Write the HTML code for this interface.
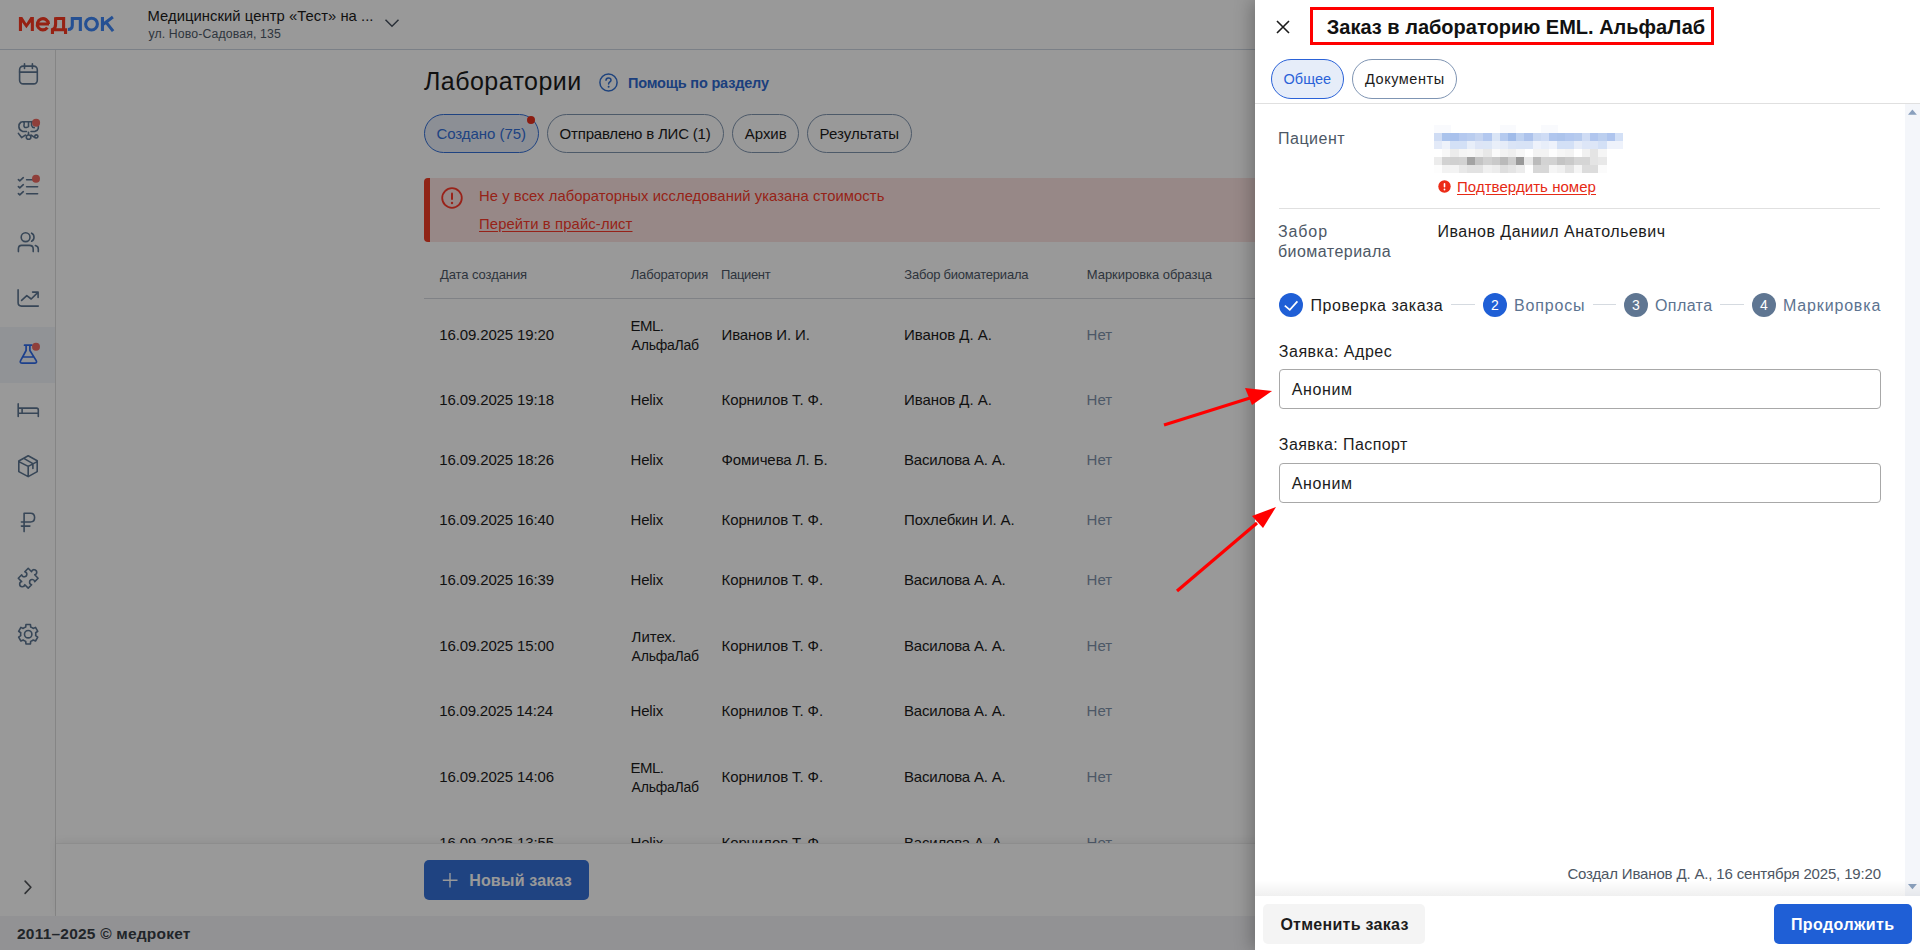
<!DOCTYPE html>
<html><head><meta charset="utf-8">
<style>
*{box-sizing:border-box;margin:0;padding:0}
html,body{width:1920px;height:950px;overflow:hidden;background:#fff;font-family:"Liberation Sans",sans-serif;color:#1c1c1c}
.a{position:absolute;white-space:nowrap}
.tab{position:absolute;height:39px;border:1px solid #8196b0;border-radius:20px}
.tab.act{background:#e9eef8;border-color:#3470d8}
.dtab{position:absolute;height:40px;border:1px solid #7f95b3;border-radius:20px}
.dtab.act{background:#e6edf9;border-color:#2a62d8}
.snum{position:absolute;width:24px;height:24px;border-radius:50%;color:#fff;font-size:14px;line-height:24px;text-align:center}
.inp{position:absolute;width:602px;height:40px;border:1px solid #a8a8a8;border-radius:4px}
.hl{position:absolute;height:1px}
</style></head><body>
<!-- PAGE -->
<div class="hl" style="left:0;top:49px;width:1920px;background:#cdd6e2"></div>
<svg class="a" style="left:0;top:0" width="120" height="40" viewBox="0 0 120 40" fill="none" stroke-linejoin="miter">
<g stroke="#fa3a22" stroke-width="3.1">
<path d="M18.9 17H22.3L26.4 23.6L30.5 17H33.9V31H30.8V22.3L26.4 28.2L22 22.3V31H18.9Z" fill="#fa3a22" stroke="none"/>
<path d="M49 24H37.8M48.5 24A5.6 5.6 0 1 0 47.4 27.6" />
<path d="M55.4 18.45H65.2M63.6 17V29.8M55.6 17.2V24.2C55.6 27.2 54.5 29 52.3 29.8M50.9 29.75H67.1M52.45 29.8V34.1M65.55 29.8V34"/>
</g>
<g stroke="#3f86f5" stroke-width="3.1">
<path d="M70.8 18.5H81.9M80.35 17V31M72.3 17.2V25.2C72.3 28.2 70.9 29.45 67.9 29.45"/>
<circle cx="91.5" cy="24.1" r="5.9"/>
<path d="M102.45 17V31M103.2 24.2L112.9 17.1M106.2 22.4L113.1 31.1"/>
</g>
</svg>
<svg class="a" style="left:384px;top:18px" width="16" height="10" viewBox="0 0 16 10"><path d="M1.5 1.8 L8 8.2 L14.5 1.8" fill="none" stroke="#46505e" stroke-width="1.5"/></svg>
<div class="a" style="left:55px;top:50px;width:1px;height:866px;background:#dedede"></div>
<div class="a" style="left:0;top:327px;width:55px;height:56px;background:#f2f5fa"></div>
<svg class="a" style="left:0;top:0" width="56" height="950" viewBox="0 0 56 950" fill="none" stroke="#5c7591" stroke-width="1.6" stroke-linecap="round" stroke-linejoin="round">
<rect x="19.6" y="66.1" width="17.7" height="17.8" rx="3.6"/><path d="M24.5 63.8V68.4M32.4 63.8V68.4M19.6 72.1H37.3"/>
<path d="M20.76 122.25C18.23 124.10 17.73 129.83 22.44 131.35L26.48 131.51M20.76 122.25C22.78 121.24 24.80 121.75 24.13 124.10C23.45 126.46 24.46 128.15 27.16 127.30M23.45 121.68L32.21 121.48M28.50 121.92V126.80M32.21 121.48C30.86 123.77 31.20 127.47 34.23 127.64M37.60 123.77C39.28 126.80 38.61 130.84 34.90 131.35L31.03 131.51M28.50 132.36V134.55M18.40 133.37L21.60 137.58L25.30 135.05M26.31 137.24C26.31 139.93 30.86 139.93 30.86 137.24C30.86 135.89 29.68 135.05 28.50 135.05C27.33 135.05 26.31 135.89 26.31 137.24M31.20 135.05L34.90 137.58C37.60 138.92 38.95 135.89 36.92 135.05C35.58 134.55 34.23 135.56 34.90 137.58"/>
<path d="M18.4 179.6L19.8 180.9L23.3 177.7M18.4 186.6L19.8 187.9L23.3 184.7M18.4 193.6L19.8 194.9L23.3 191.7M26.6 179.8H37.6M26.6 186.7H37.6M26.6 193.8H37.6"/>
<circle cx="25.6" cy="237.2" r="4.4"/><path d="M31.6 233.2C34.8 234.6 34.8 239.8 31.6 241.2M18.4 251.6V248.9C18.4 246.9 19.4 245.4 21.6 245.4H29.4C31.6 245.4 33.2 246.6 33.2 248.9V251.6M35.4 245.6C37.2 246.2 38.3 247.3 38.3 249V251.6"/>
<path d="M18.1 289.9V302.6C18.1 305 19.3 306.1 21.5 306.1H38.3M21.6 300.4L26.8 295.6L31.2 299L37.9 292.4M32.6 292.1H38.1V297.4"/>
<path d="M18.2 403.9V416.4M18.2 408.1H36.6C37.6 408.1 38.3 408.8 38.3 410V416.4M18.2 413.2H38.3M22.1 408.1V413.2"/>
<path d="M28.2 455.7L37.2 460.7V471.6L28.2 476.6L18.8 471.6V461L28.2 455.7ZM18.8 461.6L28.2 466.4L37.2 461.6M28.2 466.4V476.6M23.8 458.4L32.9 463.6V468.4"/>
<path d="M24.1 531.6V513.2H30.6C33 513.2 34.6 515 34.6 517.6C34.6 520.2 33 522 30.6 522H21.4M21.4 526.1H29.9"/>
<g transform="translate(28.2 578.2) rotate(45)"><path d="M-7 -7H-2.2A2.6 2.6 0 1 1 2.2 -7H7V-2.2A2.6 2.6 0 1 0 7 2.2V7H2.2A2.6 2.6 0 1 1 -2.2 7H-7V2.2A2.6 2.6 0 1 0 -7 -2.2Z"/></g>
<path d="M24.40 627.62 L25.73 627.01 L25.95 624.46 L30.45 624.46 L30.67 627.01 L32.00 627.62 L33.19 628.46 L35.51 627.38 L37.76 631.28 L35.66 632.75 L35.80 634.20 L35.66 635.65 L37.76 637.12 L35.51 641.02 L33.19 639.94 L32.00 640.78 L30.67 641.39 L30.45 643.94 L25.95 643.94 L25.73 641.39 L24.40 640.78 L23.21 639.94 L20.89 641.02 L18.64 637.12 L20.74 635.65 L20.60 634.20 L20.74 632.75 L18.64 631.28 L20.89 627.38 L23.21 628.46Z"/><circle cx="28.2" cy="634.2" r="3.7"/>
<path d="M25.1 881.1L30.9 887.2L25.1 893.4" stroke="#505357"/>
</svg>
<svg class="a" style="left:0;top:0" width="56" height="400" viewBox="0 0 56 400" stroke="none">
<path d="M24.5 345.2H31.9M26.1 345.4V350.5L20.6 360.6C19.7 362.2 20.6 363.1 22.2 363.1H34.6C36.2 363.1 37.1 362.2 36.2 360.6L29.9 350.5V345.4M22.8 357H33.6" fill="none" stroke="#2f6bea" stroke-width="1.7" stroke-linecap="round" stroke-linejoin="round"/>
<circle cx="36.1" cy="122.8" r="4" fill="#ef6a62"/><circle cx="36" cy="178.8" r="4" fill="#ef6a62"/><circle cx="36" cy="346.8" r="4" fill="#ef6a62"/>
</svg>

<div class="tab act" style="left:424px;top:114px;width:115px"></div>
<div class="a" style="left:527px;top:116px;width:8px;height:8px;border-radius:50%;background:#e8301c"></div>
<div class="tab" style="left:547px;top:114px;width:177px"></div>
<div class="tab" style="left:732px;top:114px;width:67px"></div>
<div class="tab" style="left:807px;top:114px;width:105px"></div>
<div class="a" style="left:424px;top:178px;width:900px;height:64px;background:#fce3e1;border-left:6px solid #f03c26;border-radius:4px 0 0 4px"></div>
<svg class="a" style="left:441px;top:187px" width="22" height="22" viewBox="0 0 22 22"><circle cx="11" cy="11" r="9.8" fill="none" stroke="#ff3a2a" stroke-width="1.8"/><rect x="10" y="5.5" width="2" height="7.5" rx="1" fill="#ff3a2a"/><circle cx="11" cy="16" r="1.2" fill="#ff3a2a"/></svg>
<svg class="a" style="left:599px;top:73px" width="19" height="19" viewBox="0 0 19 19"><circle cx="9.5" cy="9.5" r="8.6" fill="none" stroke="#3370d1" stroke-width="1.5"/><path d="M7 7.3C7 5.9 8.1 5 9.5 5C10.9 5 12 5.9 12 7.2C12 8.9 9.6 9 9.6 11" fill="none" stroke="#3370d1" stroke-width="1.5" stroke-linecap="round"/><circle cx="9.6" cy="13.8" r="1" fill="#3370d1"/></svg>
<div class="a" style="left:147.50px;top:9.07px;font-size:14.8px;font-weight:400;letter-spacing:0.047px;line-height:1;color:#1c1c1c;">Медицинский центр «Тест» на ...</div>
<div class="a" style="left:148.50px;top:28.29px;font-size:12.3px;font-weight:400;letter-spacing:0.110px;line-height:1;color:#4f5a68;">ул. Ново-Садовая, 135</div>
<div class="a" style="left:424.00px;top:69.34px;font-size:25px;font-weight:400;letter-spacing:0.440px;line-height:1;color:#1c1c1c;">Лаборатории</div>
<div class="a" style="left:628.00px;top:76.33px;font-size:14.5px;font-weight:700;letter-spacing:-0.188px;line-height:1;color:#2f6ad0;">Помощь по разделу</div>
<div class="a" style="left:436.40px;top:126.00px;font-size:15px;font-weight:400;letter-spacing:-0.036px;line-height:1;color:#3470d8;">Создано (75)</div>
<div class="a" style="left:559.60px;top:126.00px;font-size:15px;font-weight:400;letter-spacing:-0.205px;line-height:1;color:#1c1c1c;">Отправлено в ЛИС (1)</div>
<div class="a" style="left:744.80px;top:126.00px;font-size:15px;font-weight:400;letter-spacing:-0.050px;line-height:1;color:#1c1c1c;">Архив</div>
<div class="a" style="left:819.50px;top:126.00px;font-size:15px;font-weight:400;letter-spacing:0.067px;line-height:1;color:#1c1c1c;">Результаты</div>
<div class="a" style="left:479.00px;top:188.97px;font-size:14.8px;font-weight:400;letter-spacing:0.067px;line-height:1;color:#fa3a2a;">Не у всех лабораторных исследований указана стоимость</div>
<div class="a" style="left:479.00px;top:217.47px;font-size:14.8px;font-weight:400;letter-spacing:0.132px;line-height:1;color:#fa3a2a;text-decoration:underline;text-underline-offset:2px">Перейти в прайс-лист</div>
<div class="a" style="left:440.00px;top:267.80px;font-size:13px;font-weight:400;letter-spacing:-0.083px;line-height:1;color:#4d5866;">Дата создания</div>
<div class="a" style="left:630.75px;top:267.80px;font-size:13px;font-weight:400;letter-spacing:-0.175px;line-height:1;color:#4d5866;">Лаборатория</div>
<div class="a" style="left:721.00px;top:267.80px;font-size:13px;font-weight:400;letter-spacing:-0.333px;line-height:1;color:#4d5866;">Пациент</div>
<div class="a" style="left:904.30px;top:267.80px;font-size:13px;font-weight:400;letter-spacing:-0.224px;line-height:1;color:#4d5866;">Забор биоматериала</div>
<div class="a" style="left:1086.80px;top:267.80px;font-size:13px;font-weight:400;letter-spacing:-0.053px;line-height:1;color:#4d5866;">Маркировка образца</div>
<div class="hl" style="left:424px;top:298px;width:900px;background:#d5d9df"></div>
<div class="a" style="left:439.20px;top:327.30px;font-size:15px;font-weight:400;letter-spacing:-0.120px;line-height:1;color:#1c1c1c;">16.09.2025 19:20</div>
<div class="a" style="left:630.60px;top:317.60px;font-size:15px;font-weight:400;letter-spacing:-0.600px;line-height:1;color:#1c1c1c;">EML.</div>
<div class="a" style="left:631.60px;top:337.65px;font-size:14px;font-weight:400;letter-spacing:-0.229px;line-height:1;color:#1c1c1c;">АльфаЛаб</div>
<div class="a" style="left:721.50px;top:327.30px;font-size:15px;font-weight:400;letter-spacing:-0.127px;line-height:1;color:#1c1c1c;">Иванов И. И.</div>
<div class="a" style="left:904.00px;top:327.30px;font-size:15px;font-weight:400;letter-spacing:-0.045px;line-height:1;color:#1c1c1c;">Иванов Д. А.</div>
<div class="a" style="left:1086.60px;top:327.30px;font-size:15px;font-weight:400;letter-spacing:0.000px;line-height:1;color:#8193ab;">Нет</div>
<div class="a" style="left:439.20px;top:392.30px;font-size:15px;font-weight:400;letter-spacing:-0.120px;line-height:1;color:#1c1c1c;">16.09.2025 19:18</div>
<div class="a" style="left:630.60px;top:392.30px;font-size:15px;font-weight:400;letter-spacing:-0.200px;line-height:1;color:#1c1c1c;">Helix</div>
<div class="a" style="left:721.50px;top:392.30px;font-size:15px;font-weight:400;letter-spacing:-0.100px;line-height:1;color:#1c1c1c;">Корнилов Т. Ф.</div>
<div class="a" style="left:904.00px;top:392.30px;font-size:15px;font-weight:400;letter-spacing:-0.045px;line-height:1;color:#1c1c1c;">Иванов Д. А.</div>
<div class="a" style="left:1086.60px;top:392.30px;font-size:15px;font-weight:400;letter-spacing:0.000px;line-height:1;color:#8193ab;">Нет</div>
<div class="a" style="left:439.20px;top:452.30px;font-size:15px;font-weight:400;letter-spacing:-0.120px;line-height:1;color:#1c1c1c;">16.09.2025 18:26</div>
<div class="a" style="left:630.60px;top:452.30px;font-size:15px;font-weight:400;letter-spacing:-0.200px;line-height:1;color:#1c1c1c;">Helix</div>
<div class="a" style="left:721.50px;top:452.30px;font-size:15px;font-weight:400;letter-spacing:-0.077px;line-height:1;color:#1c1c1c;">Фомичева Л. Б.</div>
<div class="a" style="left:904.00px;top:452.30px;font-size:15px;font-weight:400;letter-spacing:-0.208px;line-height:1;color:#1c1c1c;">Василова А. А.</div>
<div class="a" style="left:1086.60px;top:452.30px;font-size:15px;font-weight:400;letter-spacing:0.000px;line-height:1;color:#8193ab;">Нет</div>
<div class="a" style="left:439.20px;top:512.30px;font-size:15px;font-weight:400;letter-spacing:-0.120px;line-height:1;color:#1c1c1c;">16.09.2025 16:40</div>
<div class="a" style="left:630.60px;top:512.30px;font-size:15px;font-weight:400;letter-spacing:-0.200px;line-height:1;color:#1c1c1c;">Helix</div>
<div class="a" style="left:721.50px;top:512.30px;font-size:15px;font-weight:400;letter-spacing:-0.100px;line-height:1;color:#1c1c1c;">Корнилов Т. Ф.</div>
<div class="a" style="left:904.00px;top:512.30px;font-size:15px;font-weight:400;letter-spacing:-0.143px;line-height:1;color:#1c1c1c;">Похлебкин И. А.</div>
<div class="a" style="left:1086.60px;top:512.30px;font-size:15px;font-weight:400;letter-spacing:0.000px;line-height:1;color:#8193ab;">Нет</div>
<div class="a" style="left:439.20px;top:572.30px;font-size:15px;font-weight:400;letter-spacing:-0.120px;line-height:1;color:#1c1c1c;">16.09.2025 16:39</div>
<div class="a" style="left:630.60px;top:572.30px;font-size:15px;font-weight:400;letter-spacing:-0.200px;line-height:1;color:#1c1c1c;">Helix</div>
<div class="a" style="left:721.50px;top:572.30px;font-size:15px;font-weight:400;letter-spacing:-0.100px;line-height:1;color:#1c1c1c;">Корнилов Т. Ф.</div>
<div class="a" style="left:904.00px;top:572.30px;font-size:15px;font-weight:400;letter-spacing:-0.208px;line-height:1;color:#1c1c1c;">Василова А. А.</div>
<div class="a" style="left:1086.60px;top:572.30px;font-size:15px;font-weight:400;letter-spacing:0.000px;line-height:1;color:#8193ab;">Нет</div>
<div class="a" style="left:439.20px;top:638.30px;font-size:15px;font-weight:400;letter-spacing:-0.120px;line-height:1;color:#1c1c1c;">16.09.2025 15:00</div>
<div class="a" style="left:631.60px;top:628.60px;font-size:15px;font-weight:400;letter-spacing:-0.040px;line-height:1;color:#1c1c1c;">Литех.</div>
<div class="a" style="left:631.60px;top:648.65px;font-size:14px;font-weight:400;letter-spacing:-0.229px;line-height:1;color:#1c1c1c;">АльфаЛаб</div>
<div class="a" style="left:721.50px;top:638.30px;font-size:15px;font-weight:400;letter-spacing:-0.100px;line-height:1;color:#1c1c1c;">Корнилов Т. Ф.</div>
<div class="a" style="left:904.00px;top:638.30px;font-size:15px;font-weight:400;letter-spacing:-0.208px;line-height:1;color:#1c1c1c;">Василова А. А.</div>
<div class="a" style="left:1086.60px;top:638.30px;font-size:15px;font-weight:400;letter-spacing:0.000px;line-height:1;color:#8193ab;">Нет</div>
<div class="a" style="left:439.20px;top:703.30px;font-size:15px;font-weight:400;letter-spacing:-0.187px;line-height:1;color:#1c1c1c;">16.09.2025 14:24</div>
<div class="a" style="left:630.60px;top:703.30px;font-size:15px;font-weight:400;letter-spacing:-0.200px;line-height:1;color:#1c1c1c;">Helix</div>
<div class="a" style="left:721.50px;top:703.30px;font-size:15px;font-weight:400;letter-spacing:-0.100px;line-height:1;color:#1c1c1c;">Корнилов Т. Ф.</div>
<div class="a" style="left:904.00px;top:703.30px;font-size:15px;font-weight:400;letter-spacing:-0.208px;line-height:1;color:#1c1c1c;">Василова А. А.</div>
<div class="a" style="left:1086.60px;top:703.30px;font-size:15px;font-weight:400;letter-spacing:0.000px;line-height:1;color:#8193ab;">Нет</div>
<div class="a" style="left:439.20px;top:769.30px;font-size:15px;font-weight:400;letter-spacing:-0.120px;line-height:1;color:#1c1c1c;">16.09.2025 14:06</div>
<div class="a" style="left:630.60px;top:759.60px;font-size:15px;font-weight:400;letter-spacing:-0.600px;line-height:1;color:#1c1c1c;">EML.</div>
<div class="a" style="left:631.60px;top:779.65px;font-size:14px;font-weight:400;letter-spacing:-0.229px;line-height:1;color:#1c1c1c;">АльфаЛаб</div>
<div class="a" style="left:721.50px;top:769.30px;font-size:15px;font-weight:400;letter-spacing:-0.100px;line-height:1;color:#1c1c1c;">Корнилов Т. Ф.</div>
<div class="a" style="left:904.00px;top:769.30px;font-size:15px;font-weight:400;letter-spacing:-0.208px;line-height:1;color:#1c1c1c;">Василова А. А.</div>
<div class="a" style="left:1086.60px;top:769.30px;font-size:15px;font-weight:400;letter-spacing:0.000px;line-height:1;color:#8193ab;">Нет</div>
<div class="a" style="left:439.20px;top:835.30px;font-size:15px;font-weight:400;letter-spacing:-0.120px;line-height:1;color:#1c1c1c;">16.09.2025 13:55</div>
<div class="a" style="left:630.60px;top:835.30px;font-size:15px;font-weight:400;letter-spacing:-0.200px;line-height:1;color:#1c1c1c;">Helix</div>
<div class="a" style="left:721.50px;top:835.30px;font-size:15px;font-weight:400;letter-spacing:-0.100px;line-height:1;color:#1c1c1c;">Корнилов Т. Ф.</div>
<div class="a" style="left:904.00px;top:835.30px;font-size:15px;font-weight:400;letter-spacing:-0.208px;line-height:1;color:#1c1c1c;">Василова А. А.</div>
<div class="a" style="left:1086.60px;top:835.30px;font-size:15px;font-weight:400;letter-spacing:0.000px;line-height:1;color:#8193ab;">Нет</div>
<div class="a" style="left:56px;top:843px;width:1864px;height:73px;background:#fff;border-top:1px solid #ececec;box-shadow:0 -2px 8px rgba(0,0,0,0.06)"></div>
<div class="a" style="left:424px;top:860px;width:165px;height:40px;background:#3470d8;border-radius:5px"></div>
<svg class="a" style="left:441px;top:871px" width="18" height="18" viewBox="0 0 18 18"><path d="M9 2V16.5M1.8 9.2H16.5" stroke="#fff" stroke-width="1.4"/></svg>
<div class="a" style="left:0;top:916px;width:1920px;height:34px;background:#f3f4f7"></div>
<div class="a" style="left:469.20px;top:872.96px;font-size:16px;font-weight:700;letter-spacing:0.170px;line-height:1;color:#fff;">Новый заказ</div>
<div class="a" style="left:17.00px;top:926.13px;font-size:15.5px;font-weight:700;letter-spacing:0.211px;line-height:1;color:#383e46;">2011–2025 © медрокет</div>
<!-- OVERLAY -->
<div class="a" style="left:0;top:0;width:1920px;height:950px;background:rgba(0,0,0,0.4)"></div>
<!-- DRAWER -->
<div class="a" style="left:1255px;top:0;width:665px;height:950px;background:#fff;box-shadow:-4px 0 16px rgba(0,0,0,0.25)"></div>
<svg class="a" style="left:1276px;top:20px" width="14" height="14" viewBox="0 0 14 14"><path d="M1 1L13 13M13 1L1 13" stroke="#1c1c1c" stroke-width="1.6"/></svg>
<div class="dtab act" style="left:1271px;top:59px;width:73px"></div>
<div class="dtab" style="left:1352px;top:59px;width:105px"></div>
<div class="hl" style="left:1255px;top:103px;width:665px;background:#e0e0e0"></div>
<div class="a" style="left:1905px;top:104px;width:15px;height:792px;background:#f4f6fa"></div>
<svg class="a" style="left:1907px;top:108px" width="11" height="8" viewBox="0 0 11 8"><path d="M1 6.8L5.4 1.6L9.9 6.8Z" fill="#8aa0bd"/></svg>
<svg class="a" style="left:1907px;top:883px" width="11" height="8" viewBox="0 0 11 8"><path d="M1 1L5.4 6.2L9.9 1Z" fill="#8aa0bd"/></svg>
<svg class="a" style="left:1434px;top:125px" width="189" height="48" viewBox="0 0 189 48" shape-rendering="crispEdges"><rect x="0.00" y="0" width="8.52" height="8" fill="#f9fafd"/><rect x="8.22" y="0" width="8.52" height="8" fill="#f9fafd"/><rect x="65.74" y="0" width="8.52" height="8" fill="#f9fafd"/><rect x="73.96" y="0" width="8.52" height="8" fill="#f9fafd"/><rect x="106.83" y="0" width="8.52" height="8" fill="#f9fafd"/><rect x="115.04" y="0" width="8.52" height="8" fill="#f9fafd"/><rect x="0.00" y="8" width="8.52" height="8" fill="#cfdcf4"/><rect x="8.22" y="8" width="8.52" height="8" fill="#aac3ec"/><rect x="16.43" y="8" width="8.52" height="8" fill="#a9c1ec"/><rect x="24.65" y="8" width="8.52" height="8" fill="#b5c9ef"/><rect x="32.87" y="8" width="8.52" height="8" fill="#bacdef"/><rect x="41.09" y="8" width="8.52" height="8" fill="#c5d4f0"/><rect x="49.30" y="8" width="8.52" height="8" fill="#b3c8ef"/><rect x="57.52" y="8" width="8.52" height="8" fill="#dae5f6"/><rect x="65.74" y="8" width="8.52" height="8" fill="#b5caef"/><rect x="73.96" y="8" width="8.52" height="8" fill="#a0bbe9"/><rect x="82.17" y="8" width="8.52" height="8" fill="#bed1f0"/><rect x="90.39" y="8" width="8.52" height="8" fill="#adc3ec"/><rect x="98.61" y="8" width="8.52" height="8" fill="#c9d8f2"/><rect x="106.83" y="8" width="8.52" height="8" fill="#cfdcf5"/><rect x="115.04" y="8" width="8.52" height="8" fill="#b0c6ee"/><rect x="123.26" y="8" width="8.52" height="8" fill="#adc4ec"/><rect x="131.48" y="8" width="8.52" height="8" fill="#b3c8ef"/><rect x="139.70" y="8" width="8.52" height="8" fill="#b7cbee"/><rect x="147.91" y="8" width="8.52" height="8" fill="#cfdcf4"/><rect x="156.13" y="8" width="8.52" height="8" fill="#b1c6ee"/><rect x="164.35" y="8" width="8.52" height="8" fill="#bccfef"/><rect x="172.57" y="8" width="8.52" height="8" fill="#afc5ee"/><rect x="180.78" y="8" width="8.52" height="8" fill="#d3e0f6"/><rect x="0.00" y="16" width="8.52" height="8" fill="#e3eaf8"/><rect x="8.22" y="16" width="8.52" height="8" fill="#eef2fa"/><rect x="16.43" y="16" width="8.52" height="8" fill="#d3e0f6"/><rect x="24.65" y="16" width="8.52" height="8" fill="#d3e0f6"/><rect x="32.87" y="16" width="8.52" height="8" fill="#e8eef9"/><rect x="41.09" y="16" width="8.52" height="8" fill="#dde5f6"/><rect x="49.30" y="16" width="8.52" height="8" fill="#dce6f6"/><rect x="57.52" y="16" width="8.52" height="8" fill="#e9eff9"/><rect x="65.74" y="16" width="8.52" height="8" fill="#e6ecf8"/><rect x="73.96" y="16" width="8.52" height="8" fill="#dae4f6"/><rect x="82.17" y="16" width="8.52" height="8" fill="#d8e3f6"/><rect x="90.39" y="16" width="8.52" height="8" fill="#d8e3f6"/><rect x="98.61" y="16" width="8.52" height="8" fill="#eef2fb"/><rect x="106.83" y="16" width="8.52" height="8" fill="#e8eef9"/><rect x="115.04" y="16" width="8.52" height="8" fill="#eef2fb"/><rect x="123.26" y="16" width="8.52" height="8" fill="#d3e0f6"/><rect x="131.48" y="16" width="8.52" height="8" fill="#d3e0f6"/><rect x="139.70" y="16" width="8.52" height="8" fill="#e6ecf8"/><rect x="147.91" y="16" width="8.52" height="8" fill="#dde6f7"/><rect x="156.13" y="16" width="8.52" height="8" fill="#dde6f7"/><rect x="164.35" y="16" width="8.52" height="8" fill="#d3e0f6"/><rect x="172.57" y="16" width="8.52" height="8" fill="#eef2fb"/><rect x="180.78" y="16" width="8.52" height="8" fill="#eef2fb"/><rect x="8.22" y="24" width="8.52" height="8" fill="#f8f8f8"/><rect x="16.43" y="24" width="8.52" height="8" fill="#ececec"/><rect x="24.65" y="24" width="8.52" height="8" fill="#f5f5f5"/><rect x="32.87" y="24" width="8.52" height="8" fill="#f7f7f7"/><rect x="41.09" y="24" width="8.52" height="8" fill="#f1f1f1"/><rect x="49.30" y="24" width="8.52" height="8" fill="#e8e8e8"/><rect x="57.52" y="24" width="8.52" height="8" fill="#fafafa"/><rect x="65.74" y="24" width="8.52" height="8" fill="#f3f3f3"/><rect x="73.96" y="24" width="8.52" height="8" fill="#efefef"/><rect x="82.17" y="24" width="8.52" height="8" fill="#f7f7f7"/><rect x="98.61" y="24" width="8.52" height="8" fill="#f3f3f3"/><rect x="106.83" y="24" width="8.52" height="8" fill="#f3f3f3"/><rect x="115.04" y="24" width="8.52" height="8" fill="#fdfdfd"/><rect x="123.26" y="24" width="8.52" height="8" fill="#f6f6f6"/><rect x="131.48" y="24" width="8.52" height="8" fill="#f3f3f3"/><rect x="147.91" y="24" width="8.52" height="8" fill="#f1f1f1"/><rect x="156.13" y="24" width="8.52" height="8" fill="#e4e4e4"/><rect x="164.35" y="24" width="8.52" height="8" fill="#f5f5f5"/><rect x="0.00" y="32" width="8.52" height="8" fill="#ececec"/><rect x="8.22" y="32" width="8.52" height="8" fill="#d2d2d2"/><rect x="16.43" y="32" width="8.52" height="8" fill="#d0d0d0"/><rect x="24.65" y="32" width="8.52" height="8" fill="#d2d2d2"/><rect x="32.87" y="32" width="8.52" height="8" fill="#a3a3a3"/><rect x="41.09" y="32" width="8.52" height="8" fill="#c4c4c4"/><rect x="49.30" y="32" width="8.52" height="8" fill="#d0d0d0"/><rect x="57.52" y="32" width="8.52" height="8" fill="#c9c9c9"/><rect x="65.74" y="32" width="8.52" height="8" fill="#bababa"/><rect x="73.96" y="32" width="8.52" height="8" fill="#cdcdcd"/><rect x="82.17" y="32" width="8.52" height="8" fill="#999999"/><rect x="90.39" y="32" width="8.52" height="8" fill="#e8e8e8"/><rect x="98.61" y="32" width="8.52" height="8" fill="#bbbbbb"/><rect x="106.83" y="32" width="8.52" height="8" fill="#d3d3d3"/><rect x="115.04" y="32" width="8.52" height="8" fill="#d2d2d2"/><rect x="123.26" y="32" width="8.52" height="8" fill="#c4c4c4"/><rect x="131.48" y="32" width="8.52" height="8" fill="#cacaca"/><rect x="139.70" y="32" width="8.52" height="8" fill="#d5d5d5"/><rect x="147.91" y="32" width="8.52" height="8" fill="#d5d5d5"/><rect x="156.13" y="32" width="8.52" height="8" fill="#e4e4e4"/><rect x="164.35" y="32" width="8.52" height="8" fill="#e8e8e8"/><rect x="0.00" y="40" width="8.52" height="8" fill="#fdfdfd"/><rect x="8.22" y="40" width="8.52" height="8" fill="#f2f2f2"/><rect x="16.43" y="40" width="8.52" height="8" fill="#f3f3f3"/><rect x="24.65" y="40" width="8.52" height="8" fill="#e8e8e8"/><rect x="32.87" y="40" width="8.52" height="8" fill="#e2e2e2"/><rect x="41.09" y="40" width="8.52" height="8" fill="#e2e2e2"/><rect x="49.30" y="40" width="8.52" height="8" fill="#f0f0f0"/><rect x="57.52" y="40" width="8.52" height="8" fill="#ececec"/><rect x="65.74" y="40" width="8.52" height="8" fill="#dedede"/><rect x="73.96" y="40" width="8.52" height="8" fill="#e4e4e4"/><rect x="82.17" y="40" width="8.52" height="8" fill="#ececec"/><rect x="98.61" y="40" width="8.52" height="8" fill="#d7d7d7"/><rect x="106.83" y="40" width="8.52" height="8" fill="#d7d7d7"/><rect x="115.04" y="40" width="8.52" height="8" fill="#f5f5f5"/><rect x="123.26" y="40" width="8.52" height="8" fill="#f0f0f0"/><rect x="131.48" y="40" width="8.52" height="8" fill="#e2e2e2"/><rect x="139.70" y="40" width="8.52" height="8" fill="#f5f5f5"/><rect x="147.91" y="40" width="8.52" height="8" fill="#dcdcdc"/><rect x="156.13" y="40" width="8.52" height="8" fill="#dcdcdc"/><rect x="164.35" y="40" width="8.52" height="8" fill="#fbfbfb"/></svg>
<svg class="a" style="left:1438px;top:180px" width="13" height="13" viewBox="0 0 13 13"><circle cx="6.5" cy="6.5" r="6.2" fill="#ec2c17"/><rect x="5.7" y="3" width="1.6" height="4.6" rx="0.8" fill="#fff"/><circle cx="6.5" cy="9.5" r="0.9" fill="#fff"/></svg>
<div class="hl" style="left:1279px;top:208px;width:601px;background:#e0e0e0"></div>
<svg class="a" style="left:1279px;top:293px" width="24" height="24" viewBox="0 0 24 24"><circle cx="12" cy="12" r="12" fill="#1f5fd6"/><path d="M5.8 12.6L10.8 16.8L18.4 8.4" fill="none" stroke="#fff" stroke-width="1.7"/></svg>
<div class="hl" style="left:1451px;top:304px;width:24px;background:#d5dae0"></div>
<div class="snum" style="left:1483px;top:293px;background:#1f5fd6">2</div>
<div class="hl" style="left:1593px;top:304px;width:23px;background:#d5dae0"></div>
<div class="snum" style="left:1624px;top:293px;background:#5f7692">3</div>
<div class="hl" style="left:1720px;top:304px;width:24px;background:#d5dae0"></div>
<div class="snum" style="left:1752px;top:293px;background:#5f7692">4</div>
<div class="inp" style="left:1279px;top:369px"></div>
<div class="inp" style="left:1279px;top:463px"></div>
<div class="a" style="left:1255px;top:880px;width:665px;height:16px;background:linear-gradient(to bottom,rgba(0,0,0,0),rgba(0,0,0,0.06))"></div>
<div class="a" style="left:1255px;top:896px;width:665px;height:54px;background:#fff"></div>
<div class="a" style="left:1263px;top:904px;width:162px;height:40px;background:#f4f4f4;border-radius:5px"></div>
<div class="a" style="left:1774px;top:904px;width:138px;height:40px;background:#1f5fd6;border-radius:5px"></div>
<div class="a" style="left:1326.80px;top:17.47px;font-size:20px;font-weight:700;letter-spacing:0.000px;line-height:1;color:#111;">Заказ в лабораторию EML. АльфаЛаб</div>
<div class="a" style="left:1283.50px;top:71.93px;font-size:14.5px;font-weight:400;letter-spacing:0.050px;line-height:1;color:#2a62d8;">Общее</div>
<div class="a" style="left:1365.00px;top:71.93px;font-size:14.5px;font-weight:400;letter-spacing:0.550px;line-height:1;color:#1c1c1c;">Документы</div>
<div class="a" style="left:1278.00px;top:130.96px;font-size:16px;font-weight:400;letter-spacing:0.500px;line-height:1;color:#4d5866;">Пациент</div>
<div class="a" style="left:1457.00px;top:179.05px;font-size:15px;font-weight:400;letter-spacing:0.050px;line-height:1;color:#e62a15;text-decoration:underline;text-underline-offset:2px">Подтвердить номер</div>
<div class="a" style="left:1278.00px;top:223.96px;font-size:16px;font-weight:400;letter-spacing:0.875px;line-height:1;color:#4d5866;">Забор</div>
<div class="a" style="left:1278.00px;top:243.86px;font-size:16px;font-weight:400;letter-spacing:0.455px;line-height:1;color:#4d5866;">биоматериала</div>
<div class="a" style="left:1437.50px;top:223.86px;font-size:16px;font-weight:400;letter-spacing:0.496px;line-height:1;color:#1c1c1c;">Иванов Даниил Анатольевич</div>
<div class="a" style="left:1310.50px;top:297.76px;font-size:16px;font-weight:400;letter-spacing:0.536px;line-height:1;color:#1c1c1c;">Проверка заказа</div>
<div class="a" style="left:1514.00px;top:297.76px;font-size:16px;font-weight:400;letter-spacing:0.833px;line-height:1;color:#5c7390;">Вопросы</div>
<div class="a" style="left:1655.00px;top:297.76px;font-size:16px;font-weight:400;letter-spacing:0.400px;line-height:1;color:#5c7390;">Оплата</div>
<div class="a" style="left:1783.00px;top:297.76px;font-size:16px;font-weight:400;letter-spacing:0.833px;line-height:1;color:#5c7390;">Маркировка</div>
<div class="a" style="left:1278.80px;top:343.76px;font-size:16px;font-weight:400;letter-spacing:0.525px;line-height:1;color:#1c1c1c;">Заявка: Адрес</div>
<div class="a" style="left:1291.80px;top:381.86px;font-size:16px;font-weight:400;letter-spacing:0.620px;line-height:1;color:#1c1c1c;">Аноним</div>
<div class="a" style="left:1278.80px;top:437.36px;font-size:16px;font-weight:400;letter-spacing:0.421px;line-height:1;color:#1c1c1c;">Заявка: Паспорт</div>
<div class="a" style="left:1291.80px;top:475.76px;font-size:16px;font-weight:400;letter-spacing:0.620px;line-height:1;color:#1c1c1c;">Аноним</div>
<div class="a" style="left:1567.40px;top:866.40px;font-size:15px;font-weight:400;letter-spacing:-0.160px;line-height:1;color:#4d5663;">Создал Иванов Д. А., 16 сентября 2025, 19:20</div>
<div class="a" style="left:1280.40px;top:916.66px;font-size:16px;font-weight:700;letter-spacing:0.285px;line-height:1;color:#1c1c1c;">Отменить заказ</div>
<div class="a" style="left:1790.90px;top:916.66px;font-size:16px;font-weight:700;letter-spacing:0.433px;line-height:1;color:#fff;">Продолжить</div>
<!-- ANNOTATIONS -->
<div class="a" style="left:1310px;top:7px;width:404px;height:38px;border:3px solid #ff0000"></div>
<svg class="a" style="left:0;top:0" width="1920" height="950" viewBox="0 0 1920 950"><line x1="1164" y1="425" x2="1250" y2="398" stroke="#ff0000" stroke-width="3.2"/><path d="M1272 391L1245 388L1252 405Z" fill="#ff0000"/><line x1="1177" y1="591" x2="1257" y2="523" stroke="#ff0000" stroke-width="3.2"/><path d="M1276 507L1252 516L1263 528Z" fill="#ff0000"/></svg>
</body></html>
